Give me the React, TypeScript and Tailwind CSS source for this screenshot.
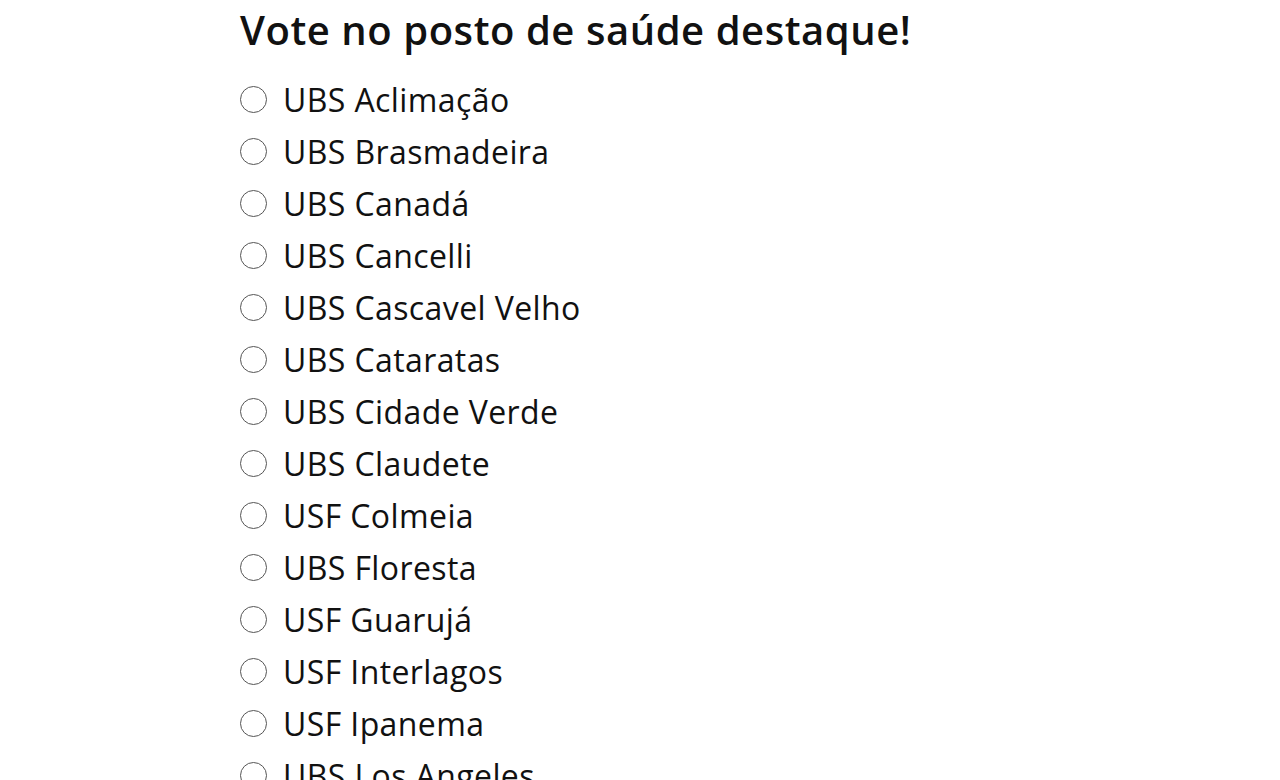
const UNIDADES = [
  'UBS Aclimação',
  'UBS Brasmadeira',
  'UBS Canadá',
  'UBS Cancelli',
  'UBS Cascavel Velho',
  'UBS Cataratas',
  'UBS Cidade Verde',
  'UBS Claudete',
  'USF Colmeia',
  'UBS Floresta',
  'USF Guarujá',
  'USF Interlagos',
  'USF Ipanema',
  'UBS Los Angeles',
]

export default function App() {
  return (
    <div className="h-[780px] overflow-hidden bg-white text-[#111] font-['Open_Sans',sans-serif]">
      <div className="pl-[240px] pt-[6px]">
        <h1 className="text-[40px] leading-[48px] font-semibold tracking-[0.55px]">
          Vote no posto de saúde destaque!
        </h1>

        <form className="mt-[20px] flex flex-col">
          {UNIDADES.map((nome) => (
            <label
              key={nome}
              className="flex items-center h-[52px] gap-[16px] text-[32px] leading-[52px] tracking-[0.4px]"
            >
              <input
                type="radio"
                name="posto"
                value={nome}
                className="appearance-none w-[27px] h-[27px] rounded-full border-[1.5px] border-[#555] bg-white shrink-0 -mt-[2px]"
              />
              <span>{nome}</span>
            </label>
          ))}
        </form>
      </div>
    </div>
  )
}
